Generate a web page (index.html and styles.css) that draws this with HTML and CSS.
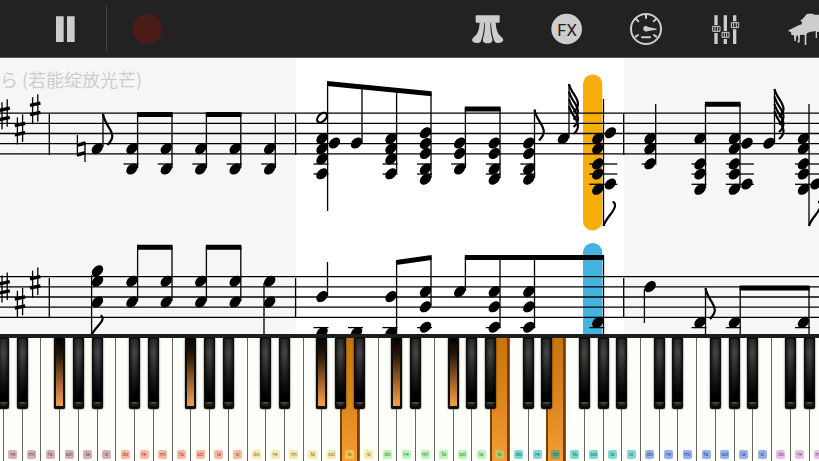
FILE: index.html
```html
<!DOCTYPE html>
<html lang="zh">
<head>
<meta charset="utf-8">
<meta name="viewport" content="width=device-width, initial-scale=1">
<title>Piano score player</title>
<link rel="stylesheet" href="styles.css">
</head>
<body>
<header class="toolbar">
  <div class="transport">
    <button class="tool" type="button" aria-label="Pause">
      <svg class="icon" viewBox="0 0 96 96"><path d="M18 10h23v77H18zM51 10h23v77H51z"/></svg>
    </button>
    <button class="tool tool-record" type="button" aria-label="Record">
      <svg class="icon" viewBox="0 0 96 96"><circle cx="49" cy="48" r="45"/></svg>
    </button>
  </div>
  <div class="tools">
    <button class="tool" type="button" aria-label="Pedal">
      <svg class="icon" viewBox="0 0 96 96">
        <path d="M19 7h68q2 0 2 2v17q0 3-3 3H20q-3 0-3-3V9q0-2 2-2z"/>
        <path d="M29 28h14C42 50 39 70 33 84c-4 10-26 7-27-3 1-8 11-11 16-21 6-11 6-21 7-32z"/>
        <path d="M77 28H63c1 22 4 42 10 56 4 10 26 7 27-3-1-8-11-11-16-21-6-11-6-21-7-32z"/>
        <path d="M45 28h16c0 20 1 34 6 50 2 8-4 13-14 13s-16-5-14-13c5-16 6-30 6-50z"/>
      </svg>
    </button>
    <button class="tool" type="button" aria-label="Effects">
      <svg class="icon" viewBox="0 0 96 96"><circle cx="50" cy="48" r="46"/><text class="fx" x="51" y="68">FX</text></svg>
    </button>
    <button class="tool" type="button" aria-label="Tempo">
      <svg class="icon" viewBox="0 0 96 96">
        <circle class="line" cx="48" cy="48" r="45"/>
        <path class="line" d="M48 4v11M18 18l7 7M78 18l-7 7M17 71l7-5M79 71l-7-5M36 73h24"/>
        <path d="M44 40c5-2 7 0 10 2l26 5v3l-26 4c-7 4-14 0-14-6 0-4 1-6 4-8z"/>
      </svg>
    </button>
    <button class="tool" type="button" aria-label="Mixer">
      <svg class="icon" viewBox="0 0 96 96">
        <path d="M13 7h10v86H13zM41 7h10v86H41zM69 7h10v86H69z"/>
        <path class="gap" d="M5 36h28v24H5zM33 54h27v24H33zM61 25h28v24H61z"/>
        <path class="knob" d="M8 40h22v15H8zM36 58h21v15H36zM64 29h22v15H64z"/>
        <path class="knob" d="M15 40v15M23 40v15M43 58v15M50 58v15M71 29v15M79 29v15"/>
      </svg>
    </button>
    <button class="tool" type="button" aria-label="Instrument">
      <svg class="icon" viewBox="0 0 96 96">
        <path d="M-3 51L26 37l9-3 1-6-5-6 7-4 9-11 5-5 17 0 4 3h20v50l-12 2v18h-4V54l-18 3-8 4-2 5v30h-5V66l-4-1-10 1-1 22-5 1-2-5 3-2-1-15-5 2-2 15h-4l-1-17-8-1-1-9-9-3z"/>
      </svg>
    </button>
  </div>
</header>
<main class="score">
  <svg class="sheet" id="sheet" role="img" aria-label="Sheet music"></svg>
</main>
<section class="keyboard" id="keyboard" aria-label="Piano keyboard"></section>
<script src="app.js"></script>
</body>
</html>
```
FILE: styles.css
```css
* {
  box-sizing: border-box;
}

body {
  margin: 0;
  height: 100vh;
  display: flex;
  flex-direction: column;
  overflow: hidden;
  background: #fff;
  font-family: "Noto Sans CJK SC", "Noto Sans", sans-serif;
}

button {
  margin: 0;
  padding: 0;
  border: 0;
  background: none;
  font: inherit;
}

/* Toolbar */
.toolbar {
  flex: none;
  display: flex;
  justify-content: space-between;
  height: 58px;
  overflow: hidden;
  background: #222;
  border-bottom: 1px solid #5c5556;
}

.transport,
.tools {
  flex: none;
  display: flex;
  align-items: center;
}

.transport {
  padding-left: 26px;
}

.tools {
  margin-right: -27px;
}

.tool {
  width: 80px;
  height: 45px;
  display: flex;
  align-items: center;
  justify-content: center;
}

.tool-record {
  border-left: 1px solid #444;
}

.icon {
  width: 32px;
  height: 32px;
  overflow: visible;
  fill: #cdcdcd;
}

.tool-record .icon {
  fill: #4b1b18;
}

.icon .line {
  fill: none;
  stroke: #cdcdcd;
  stroke-width: 6;
  stroke-linecap: round;
}

.icon .gap {
  fill: #222;
}

.icon .knob {
  fill: none;
  stroke: #cdcdcd;
  stroke-width: 3;
}

.icon .fx {
  fill: #222;
  font-family: Roboto, sans-serif;
  font-size: 50px;
  text-anchor: middle;
}

/* Score */
.score {
  flex: 1;
  min-height: 0;
  background: #f6f6f6;
}

.sheet {
  display: block;
  width: 100%;
  height: 100%;
}

.measure {
  fill: #fff;
}

.cursor-right {
  fill: #f7ae0b;
}

.cursor-left {
  fill: #43b4dd;
}

.lyric {
  fill: #cdcdcd;
  font-size: 18px;
}

.rule {
  stroke: #000;
  stroke-width: 1.3;
}

.mark {
  fill: none;
  stroke: #000;
  stroke-width: 2.2;
}

.thick {
  stroke: #000;
  stroke-width: 3.4;
}

/* Keyboard */
.keyboard {
  flex: none;
  display: flex;
  height: 127px;
  border-top: 4px solid #1c1f1d;
  background: #fffff9;
}

.slot {
  position: relative;
  flex: 0 0 2.288vw;
}

/* The lowest key is mostly scrolled out of view. */
.slot:first-child {
  margin-left: calc(3px - 2.288vw);
}

.white {
  width: 100%;
  height: 100%;
  display: flex;
  align-items: flex-end;
  justify-content: center;
  padding-bottom: 2px;
  background: #fffff9;
  border-left: 1px solid #666;
}

.white.pressed {
  background: linear-gradient(#c87408, #e08a20 60%, #f59d34);
  border-left: 2px solid #704208;
  border-right: 2px solid #704208;
}

.black {
  position: absolute;
  top: 0;
  left: -5px;
  width: 11px;
  height: 71px;
  border: 1px solid #0c0c0c;
  border-bottom-width: 3px;
  border-radius: 0 0 2px 2px;
  background: linear-gradient(90deg, #0009, #0000 35% 65%, #0009), linear-gradient(#292929, #454545 20%, #222 50%, #000 85%, #000 94%, #666 95%, #222 97%);
  box-shadow: 0 0 2px #000c;
}

.black.pressed {
  border-width: 0 2px 3px;
  background: linear-gradient(#000, #2a1808 25%, #a0642c 65%, #eb9b48 95%);
}

.chip {
  width: 9px;
  height: 9px;
  border-radius: 2px;
  overflow: hidden;
  font-family: "Open Sans", sans-serif;
  font-size: 5px;
  line-height: 9px;
  text-align: center;
}

.octave-0 { background: #d2b2b2; color: #603e3e; }
.octave-1 { background: #fbbaa4; color: #8a3020; }
.octave-2 { background: #f4eab2; color: #6c6020; }
.octave-3 { background: #baf5ba; color: #267026; }
.octave-4 { background: #84d8d0; color: #095d58; }
.octave-5 { background: #96b0e8; color: #173b8c; }
.octave-6 { background: #e6bfe5; color: #7b397b; }

.pressed .octave-2 { background: #eac458; }
.pressed .octave-3 { background: #b8c763; }
.pressed .octave-4 { background: #77a477; }
```
FILE: app.js
```js
// Sheet coordinates start below the toolbar.
const ORIGIN = 58;
const parts = [];
const add = (s) => parts.push(s);

const line = (x1, y1, x2, y2, cls = 'rule') =>
  add(`<line class="${cls}" x1="${x1}" y1="${y1}" x2="${x2}" y2="${y2}"/>`);
const head = (x, y) =>
  add(`<ellipse cx="${x}" cy="${y}" rx="6.5" ry="4.6" transform="rotate(-42 ${x} ${y})"/>`);
const beam = (x1, y1, x2, y2, h = 5) =>
  add(`<path d="M${x1 - 0.6} ${y1}L${x2 + 0.6} ${y2}v${h}L${x1 - 0.6} ${y1 + h}z"/>`);
const glyph = (x, y, d, cls = 'mark') =>
  add(`<path class="${cls}" transform="translate(${x} ${y})" d="${d}"/>`);

// Each chord: head x, head ys, stem [x, top, bottom], ledger ys, displaced head ys.
const chords = [
  [97.3, [148.7], [103, 114, 147]],
  [132, [148.7, 169], [137.6, 114, 168], [164]],
  [166.3, [148.7, 169], [172, 114, 168], [164]],
  [200.8, [148.7, 169], [206.4, 114, 168], [164]],
  [235.2, [148.7, 169], [240.8, 114, 168], [164]],
  [269.7, [148.7, 169], [275.3, 114, 168], [164]],
  [322, [138.5, 148.7, 159, 173.8], [327.6, 83, 211], [164, 174]],
  [334.5, [143], null],
  [356.5, [143], [362, 86, 143]],
  [391, [138.5, 148.7, 159, 173.8], [396.6, 89, 173], [164, 174]],
  [425.5, [132.8, 143.5, 153.5, 169, 179.2], [431, 93, 178], [164, 174]],
  [459.7, [143, 153.5, 169], [465.4, 108, 168], [164]],
  [494.3, [143, 153.5, 169, 179.2], [500, 108, 178], [164, 174]],
  [528.8, [143, 153.5, 169, 179.2], [534.5, 110, 178], [164, 174]],
  [563.4, [138.5], [569, 84, 138]],
  [597.8, [138.5, 148.7, 163.8, 174, 189.3], [603.5, 99, 226], [164, 174, 184.3], [132.7, 184]],
  [650, [138.5, 148.7, 163.8], [655.7, 104, 163], [164]],
  [700, [138.5, 163.8, 174, 189.3], [705.5, 104, 188], [164, 174, 184.3]],
  [734.4, [138.5, 148.7, 163.8, 174, 189.3], [740, 104, 188], [164, 174, 184.3], [143.2, 184]],
  [769, [143.2], [774.5, 89, 143]],
  [803.5, [138.5, 148.7, 163.8, 174, 189.3], [809, 104, 226], [164, 174, 184.3], [184]],

  [97.5, [270.8, 281.2, 302], [91.6, 275, 334]],
  [132, [281.2, 302], [137.6, 247, 301]],
  [166.3, [281.2, 302], [172, 247, 301]],
  [200.8, [281.2, 302], [206.4, 247, 301]],
  [235.2, [281.2, 302], [240.8, 247, 301]],
  [269.7, [281.2, 302], [264, 283, 334]],
  [322, [296.6], [327.5, 262, 296]],
  [322, [332.5], null, [327.6]],
  [356.5, [332.5], null, [327.6]],
  [391, [296.6, 332.5], [396.6, 262, 334], [327.6]],
  [425.5, [291.6, 306.8, 327.2], [431, 257, 306], [327.6]],
  [459.7, [291.6], [465.4, 257, 291]],
  [494.3, [291.6, 306.8, 327.2], [500, 257, 327], [327.6]],
  [528.8, [291.6, 306.8, 327.2], [534.5, 257, 327], [327.6]],
  [597.8, [322.4], [603.5, 257, 334], [327.6]],
  [650.2, [286.6], [644.4, 289, 323]],
  [700, [322.4], [705.5, 288, 334], [327.6]],
  [734.4, [322.4], [740.2, 287, 334], [327.6]],
  [803.5, [322.4], [809, 287, 334], [327.6]],
];

add('<rect class="measure" x="295.7" y="58" width="328.3" height="276"/>');
add('<rect class="cursor-right" x="583" y="74.5" width="19.3" height="156" rx="9.6"/>');
add('<rect class="cursor-left" x="583" y="243" width="19.3" height="120" rx="9.6"/>');
add('<text class="lyric" x="0" y="87">ら (若能绽放光芒)</text>');

[113.2, 123.4, 133.5, 143.7, 153.8, 276.6, 286.8, 297, 307.2, 317.4].forEach((y) => line(0, y, '100%', y));
[49.3, 295.6, 623.7].forEach((x) => {
  line(x, 114, x, 155);
  line(x, 278, x, 318);
});

[[4.6, 114.2], [20, 129.4], [35.2, 109.2], [4.6, 287.6], [20, 302.8], [35.2, 282.6]].forEach(([x, y]) => {
  line(x - 2.6, y - 12, x - 2.6, y + 15);
  line(x + 2.6, y - 15, x + 2.6, y + 12.5);
  line(x - 5.2, y - 3.8, x + 5.2, y - 6, 'thick');
  line(x - 5.2, y + 5.4, x + 5.2, y + 3.2, 'thick');
});

line(77.4, 135, 77.4, 156);
line(85, 142, 85, 162);
line(77, 145.4, 85.4, 143, 'thick');
line(77, 155, 85.4, 152.6, 'thick');

chords.forEach(([x, ys, stem, ledgers = [], right = []]) => {
  ledgers.forEach((y) => line(x - 8.5, y, x + (right.length ? 19.5 : 6.5), y));
  if (stem) line(stem[0], stem[1], stem[0], stem[2]);
  ys.forEach((y) => head(x, y));
  right.forEach((y) => head(x + 12.6, y));
});
add('<ellipse class="mark" cx="322" cy="117.6" rx="5.8" ry="3.6" transform="rotate(-45 322 117.6)"/>');

beam(137.6, 112, 172, 112);
beam(206.4, 112, 240.8, 112);
beam(327.6, 81, 431, 91.3);
beam(465.4, 106.5, 500, 106.5);
beam(705.5, 101.7, 740, 101.7);
beam(137.6, 244.7, 172, 244.7);
beam(206.4, 244.7, 240.8, 244.7);
beam(396.6, 260, 431, 255);
beam(465.4, 255, 603.5, 255);
beam(740.2, 285.5, 809, 285.5);

const flag = 'M0 0C2 11 9 15 9.3 22C9.4 26 7 28 4.5 31';
glyph(103, 114, flag);
glyph(534.5, 109.5, flag);
glyph(705.5, 288, flag);

const shortFlag = 'M0 0C2 9 9 13 9 20C9 24 7 26 4.5 28';
[[569, 84], [774.5, 89]].forEach(([x, y]) =>
  [0, 7.5, 15, 22].forEach((d) => glyph(x, y + d, shortFlag)));

const downFlag = 'M0 0C2 -8 11 -14 11.5 -20C11.6 -23 10.5 -24 9 -24';
glyph(603.5, 226, downFlag);
glyph(809, 226, downFlag);
glyph(91.6, 335, 'M0 0C2 -6 10 -11 11 -16C11 -18 10.5 -19 9 -19.5');

document.getElementById('sheet').innerHTML =
  `<g transform="translate(0 ${-ORIGIN})">${parts.join('')}</g>`;

// Keyboard: the first slot is partly scrolled out of view and has no label.
const names = ['do', 're', 'mi', 'fa', 'sol', 'la', 'si'];
const pressedWhite = [19, 27, 30];
const pressedBlack = [4, 11, 18, 22, 25];
let keys = '';
for (let i = 0; i < 45; i++) {
  const n = i % 7;
  const white = pressedWhite.includes(i) ? ' pressed' : '';
  const black = pressedBlack.includes(i) ? ' pressed' : '';
  const chip = i ? `<span class="chip octave-${Math.floor(i / 7)}">${names[n]}</span>` : '';
  keys += `<div class="slot"><button class="white${white}" type="button">${chip}</button>`;
  if (n !== 0 && n !== 3) {
    keys += `<button class="black${black}" type="button" aria-label="${names[n - 1]} sharp"></button>`;
  }
  keys += '</div>';
}
document.getElementById('keyboard').innerHTML = keys;
```
